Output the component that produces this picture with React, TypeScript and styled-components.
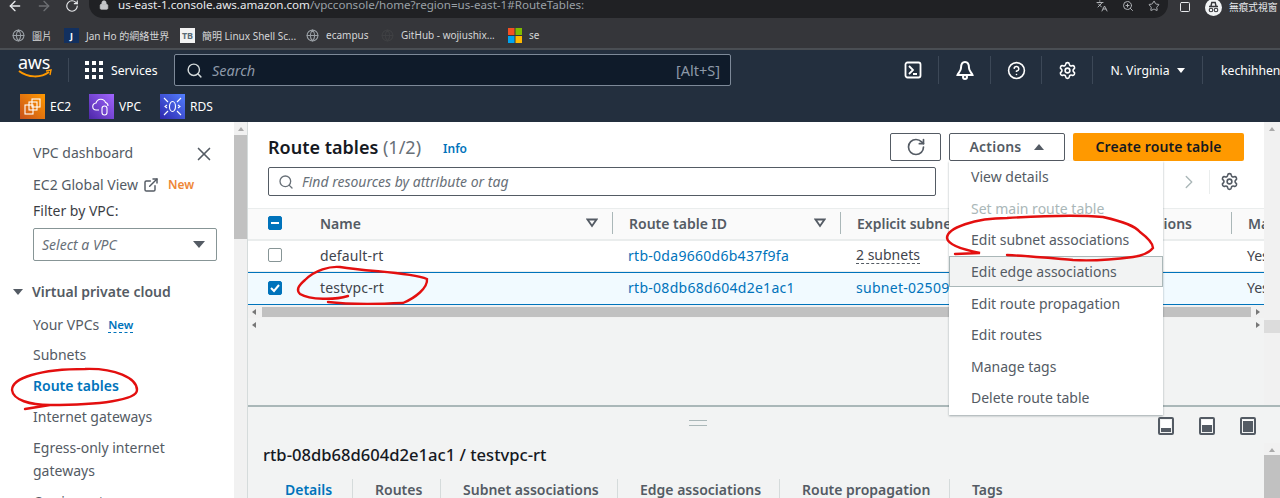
import styled, { createGlobalStyle } from "styled-components";
import {
  ArrowLeft,
  ArrowRight,
  ChevronRight,
  CircleHelp,
  ExternalLink,
  Globe,
  Languages,
  Lock,
  RotateCw,
  Search,
  Settings,
  Star,
  Square,
  X,
  ZoomIn,
} from "lucide-react";

const GlobalStyle = createGlobalStyle`
  html, body { margin: 0; padding: 0; background: #fff; }
  * { box-sizing: border-box; }
  body { font-family: "Noto Sans", "Open Sans", "Noto Sans CJK TC", sans-serif; }
`;

const Page = styled.div`
  position: relative;
  width: 1280px;
  height: 498px;
  overflow: hidden;
  display: flex;
  flex-direction: column;
`;

const AddressRow = styled.div`
  height: 18px;
  background: #35363a;
  display: flex;
  color: #e8eaed;
`;

const NavButtons = styled.div`
  width: 89px;
  display: flex;
  align-items: center;
  gap: 13px;
  padding-left: 7px;
  margin-top: -7px;
`;

const AddressPill = styled.div`
  width: 1079px;
  height: 18px;
  background: #202124;
  border-radius: 0 0 14px 14px;
  display: flex;
  align-items: center;
  padding: 0 8px 0 10px;
  font-size: 11.6px;
  color: #9aa0a6;
`;

const UrlText = styled.span`
  margin-left: 9px;
  margin-top: -9px;
  white-space: nowrap;
  b { font-weight: 400; color: #e8eaed; }
`;

const LockIcon = styled(Lock)`
  margin-top: -8px;
  flex: none;
`;

const PillIcons = styled.div`
  margin-left: auto;
  display: flex;
  gap: 14px;
  color: #aeb1b5;
  margin-top: -7px;
`;

const ProfileArea = styled.div`
  flex: 1;
  display: flex;
  align-items: center;
  padding-left: 11px;
  margin-top: -4px;
  gap: 7px;
  font-size: 9.7px;
  white-space: nowrap;
`;

const ProfileIcon = styled.svg`
  flex: none;
  margin-left: 7px;
`;

const BookmarkBar = styled.div`
  height: 32px;
  background: #35363a;
  border-bottom: 2px solid #4a4e53;
  display: flex;
  align-items: center;
  padding-top: 4px;
  color: #d4d5d7;
  font-size: 10px;
  white-space: nowrap;
`;

const Bookmark = styled.div<{ $width: number; $inset?: number }>`
  width: ${(p) => p.$width}px;
  padding-left: ${(p) => p.$inset ?? 0}px;
  display: flex;
  align-items: center;
  gap: 7px;
  flex: none;
`;

const FavTile = styled.span<{ $bg: string; $fg: string }>`
  width: 15px;
  height: 15px;
  background: ${(p) => p.$bg};
  color: ${(p) => p.$fg};
  font-size: 9px;
  font-weight: 700;
  display: flex;
  align-items: center;
  justify-content: center;
  flex: none;
`;

const NavHeader = styled.header`
  height: 72px;
  background: #232f3e;
  color: #fff;
  flex: none;
`;

const NavTop = styled.div`
  height: 40px;
  display: flex;
  align-items: center;
  padding-left: 18px;
  font-size: 12.2px;
`;

const AwsLogo = styled.div`
  width: 34px;
  height: 32px;
  flex: none;
  font-size: 18px;
  line-height: 17px;
  letter-spacing: -0.3px;
  margin-top: -1px;
  svg { display: block; margin-top: -2px; }
`;

const NavDivider = styled.span`
  width: 1px;
  height: 24px;
  background: #3c4857;
  margin: 0 16px;
  flex: none;
`;

const ServicesButton = styled.div`
  width: 89px;
  display: flex;
  align-items: center;
  gap: 8px;
  flex: none;
`;

const GridIcon = styled.div`
  width: 18px;
  height: 18px;
  display: grid;
  grid-template-columns: repeat(3, 4px);
  grid-template-rows: repeat(3, 4px);
  gap: 3px;
  span { background: #fff; }
`;

const GlobalSearch = styled.div`
  width: 557px;
  height: 32px;
  background: #0f1b2a;
  border: 1px solid #7d8998;
  border-radius: 2px;
  display: flex;
  align-items: center;
  padding: 0 10px 0 11px;
  font-size: 14.5px;
  color: #8d99a8;
  flex: none;
  svg { color: #d5dbdb; margin-right: 9px; }
  i { font-style: italic; }
  span { margin-left: auto; font-size: 14.5px; }
`;

const NavTools = styled.div`
  margin-left: 156px;
  display: flex;
  align-items: center;
  flex: none;
`;

const ToolCell = styled.div<{ $width: number; $gap?: number }>`
  width: ${(p) => p.$width}px;
  height: 28px;
  display: flex;
  align-items: center;
  justify-content: center;
  gap: ${(p) => p.$gap ?? 0}px;
  border-right: 1px solid #3c4857;
  white-space: nowrap;
`;

const UserCell = styled.div`
  padding-left: 18px;
  white-space: nowrap;
`;

const Shortcuts = styled.div`
  height: 32px;
  padding-left: 20px;
  display: flex;
  align-items: center;
  font-size: 12px;
`;

const Shortcut = styled.div<{ $width: number }>`
  width: ${(p) => p.$width}px;
  display: flex;
  align-items: center;
  gap: 5px;
  flex: none;
`;

const ServiceTile = styled.span<{ $from: string; $to: string }>`
  width: 25px;
  height: 25px;
  display: flex;
  align-items: center;
  justify-content: center;
  background: linear-gradient(45deg, ${(p) => p.$from}, ${(p) => p.$to});
`;

const Body = styled.div`
  flex: 1;
  display: flex;
  min-height: 0;
`;

const Sidebar = styled.nav`
  width: 234px;
  flex: none;
  background: #fff;
  padding: 21px 0 0 33px;
  color: #545b64;
  font-size: 14px;
  line-height: 20px;
  overflow: hidden;
  position: relative;
`;

const SideLink = styled.div<{ $gap?: number; $active?: boolean }>`
  margin-bottom: ${(p) => p.$gap ?? 11}px;
  height: 20px;
  white-space: nowrap;
  display: flex;
  align-items: center;
  color: ${(p) => (p.$active ? "#0073bb" : "#545b64")};
  font-weight: ${(p) => (p.$active ? 600 : 400)};
`;

const CloseIcon = styled(X)`
  position: absolute;
  top: 21px;
  left: 193px;
  color: #545b64;
`;

const ExternalIcon = styled(ExternalLink)`
  margin-left: 5px;
`;

const NewBadge = styled.span`
  color: #ec7211;
  opacity: 0.85;
  font-size: 12px;
  font-weight: 600;
  margin-left: 9px;
`;

const NewLink = styled.span`
  color: #0073bb;
  font-size: 11.5px;
  font-weight: 600;
  margin-left: 9px;
  border-bottom: 1px dashed #0073bb;
  line-height: 14px;
`;

const FilterLabel = styled.div`
  color: #16191f;
  opacity: 0.85;
  margin: -4px 0 7px;
`;

const VpcSelect = styled.div`
  width: 184px;
  height: 33px;
  border: 1px solid #879596;
  border-radius: 2px;
  display: flex;
  align-items: center;
  justify-content: space-between;
  padding: 0 11px 0 8px;
  font-style: italic;
  color: #687078;
  margin-bottom: 21px;
`;

const Caret = styled.span<{ $up?: boolean; $size?: number; $color?: string }>`
  display: block;
  width: 0;
  height: 0;
  flex: none;
  border-left: ${(p) => p.$size ?? 5}px solid transparent;
  border-right: ${(p) => p.$size ?? 5}px solid transparent;
  ${(p) => (p.$up ? "border-bottom" : "border-top")}: ${(p) => (p.$size ?? 5) + 1}px solid ${(p) => p.$color ?? "#545b64"};
`;

const SectionTitle = styled.div`
  display: flex;
  align-items: center;
  gap: 9px;
  margin: 0 0 13px -20px;
  font-weight: 600;
  white-space: nowrap;
`;

const ScrollTrack = styled.div<{ $width: number; $offset?: number }>`
  width: ${(p) => p.$width}px;
  margin-top: ${(p) => p.$offset ?? 0}px;
  flex: none;
  background: #f1f1f1;
  display: flex;
  flex-direction: column;
  align-items: center;
  padding-top: 5px;
`;

const ScrollThumb = styled.div<{ $height: number; $top: number; $color?: string }>`
  width: 100%;
  height: ${(p) => p.$height}px;
  margin-top: ${(p) => p.$top}px;
  background: ${(p) => p.$color ?? "#c1c1c1"};
`;

const Main = styled.main`
  flex: 1;
  min-width: 0;
  display: flex;
  flex-direction: column;
  border-left: 1px solid #d5dbdb;
  background: #f2f3f3;
`;

const TopPane = styled.div`
  height: 283px;
  flex: none;
  display: flex;
`;

const Content = styled.section`
  flex: 1;
  min-width: 0;
`;

const CardHeader = styled.div`
  height: 86px;
  background: #fff;
  padding: 10px 20px 0;
  position: relative;
`;

const TitleRow = styled.div`
  display: flex;
  align-items: center;
  height: 29px;
`;

const Title = styled.h1`
  margin: 0;
  font-size: 18px;
  font-weight: 600;
  color: #16191f;
  white-space: nowrap;
  span { font-weight: 400; color: #687078; }
`;

const InfoLink = styled.span`
  margin: 3px 0 0 22px;
  color: #0073bb;
  font-size: 12px;
  font-weight: 600;
`;

const Actions = styled.div`
  margin-left: auto;
  display: flex;
  gap: 8px;
  align-items: center;
`;

const OutlineButton = styled.div<{ $width: number }>`
  width: ${(p) => p.$width}px;
  height: 28px;
  background: #fff;
  border: 1px solid #545b64;
  border-radius: 2px;
  display: flex;
  align-items: center;
  justify-content: center;
  gap: 13px;
  color: #545b64;
  font-size: 14px;
  font-weight: 600;
  letter-spacing: 0.2px;
  position: relative;
`;

const PrimaryButton = styled.div`
  width: 171px;
  height: 28px;
  background: #ff9900;
  border-radius: 2px;
  display: flex;
  align-items: center;
  justify-content: center;
  color: #16191f;
  font-size: 14px;
  font-weight: 600;
  letter-spacing: 0.1px;
`;

const FilterRow = styled.div`
  display: flex;
  align-items: center;
  margin-top: 6px;
`;

const FilterInput = styled.div`
  width: 668px;
  height: 29px;
  border: 1px solid #545b64;
  border-radius: 2px;
  background: #fff;
  display: flex;
  align-items: center;
  gap: 8px;
  padding-left: 9px;
  font-size: 14px;
  font-style: italic;
  color: #687078;
  svg { color: #687078; }
`;

const PagerTools = styled.div`
  margin-left: auto;
  margin-right: 5px;
  display: flex;
  align-items: center;
  color: #aab7b8;
`;

const PagerGear = styled.span`
  margin-left: 9px;
  padding-left: 10px;
  border-left: 1px solid #eaeded;
  height: 24px;
  display: flex;
  align-items: center;
  color: #545b64;
`;

const Row = styled.div<{ $variant: "head" | "plain" | "selected" }>`
  display: grid;
  grid-template-columns: 56px 308px 228px 199px 192px 33px;
  height: ${(p) => (p.$variant === "selected" ? 33 : 32)}px;
  padding-bottom: 2px;
  overflow: hidden;
  align-items: center;
  font-size: 14px;
  white-space: nowrap;
  color: ${(p) => (p.$variant === "head" ? "#545b64" : "#3f444c")};
  font-weight: ${(p) => (p.$variant === "head" ? 600 : 400)};
  background: ${(p) =>
    p.$variant === "head" ? "#fafafa" : p.$variant === "selected" ? "#f1faff" : "#fff"};
  border-top: 1px solid ${(p) => (p.$variant === "selected" ? "#0073bb" : "#eaeded")};
  border-bottom: 1px solid ${(p) => (p.$variant === "selected" ? "#0073bb" : "#eaeded")};
`;

const Cell = styled.div<{ $divider?: boolean; $end?: boolean }>`
  padding: ${(p) => (p.$end ? "0 39px 0 0" : "0 0 0 16px")};
  display: flex;
  align-items: center;
  justify-content: ${(p) => (p.$end ? "flex-end" : "flex-start")};
  height: 22px;
  min-width: 0;
  overflow: hidden;
  border-left: ${(p) => (p.$divider ? "1px solid #aab7b8" : "none")};
`;

const SortIcon = styled.svg`
  display: block;
  flex: none;
  margin-left: auto;
  margin-right: 14px;
  fill: none;
  stroke: #545b64;
  stroke-width: 1.8;
`;

const NameText = styled.span`
  letter-spacing: 0.15px;
`;

const RowLink = styled.span`
  color: #0073bb;
  letter-spacing: 0.28px;
`;

const DashedText = styled.span`
  border-bottom: 1px dashed #545b64;
  line-height: 17px;
`;

const CheckBox = styled.span<{ $state: "off" | "on" | "mixed" }>`
  width: 14px;
  height: 14px;
  border-radius: 2px;
  margin-left: 20px;
  border: 1px solid ${(p) => (p.$state === "off" ? "#879596" : "#0073bb")};
  background: ${(p) => (p.$state === "off" ? "#fff" : "#0073bb")};
  display: flex;
  align-items: center;
  justify-content: center;
`;

const HScroll = styled.div<{ $thumb: boolean }>`
  height: ${(p) => (p.$thumb ? 12 : 14)}px;
  margin-top: ${(p) => (p.$thumb ? 1 : 0)}px;
  display: flex;
  align-items: center;
  justify-content: space-between;
  padding: 0 4px;
  background: ${(p) => (p.$thumb ? "#f1f1f1" : "transparent")};
`;

const HThumb = styled.div`
  position: absolute;
  left: 262px;
  width: 989px;
  height: 10px;
  background: #c1c1c1;
`;

const Arrow = styled.span<{ $dir: "left" | "right" }>`
  width: 0;
  height: 0;
  border-top: 3px solid transparent;
  border-bottom: 3px solid transparent;
  ${(p) => (p.$dir === "left" ? "border-right" : "border-left")}: 4px solid #777;
`;

const Menu = styled.div`
  position: absolute;
  z-index: 2;
  top: 27px;
  left: -1px;
  width: 214px;
  height: 254px;
  padding-top: 0.5px;
  background: #fff;
  box-shadow: 0 1px 2px rgba(0, 28, 36, 0.35);
  font-weight: 400;
  letter-spacing: 0;
`;

const MenuItem = styled.div<{ $disabled?: boolean; $hover?: boolean }>`
  height: 31.6px;
  display: flex;
  align-items: center;
  padding-left: 22px;
  font-size: 14px;
  white-space: nowrap;
  color: ${(p) => (p.$disabled ? "#aab7b8" : "#545b64")};
  background: ${(p) => (p.$hover ? "#f2f3f3" : "transparent")};
  box-shadow: ${(p) => (p.$hover ? "inset 0 0 0 1px #aab7b8" : "none")};
`;

const SplitPanel = styled.section`
  flex: 1;
  border-top: 2px solid #aab7b8;
  display: flex;
  position: relative;
`;

const SplitContent = styled.div`
  flex: 1;
  min-width: 0;
  padding: 13px 0 0 15px;
`;

const DragHandle = styled.div`
  width: 18px;
  height: 6px;
  margin-left: 426px;
  border-top: 1px solid #aab7b8;
  border-bottom: 1px solid #aab7b8;
`;

const PanelModes = styled.div`
  position: absolute;
  top: 10px;
  right: 24px;
  display: flex;
  gap: 25px;
`;

const ModeIcon = styled.span<{ $fill: number }>`
  width: 16px;
  height: 18px;
  border: 2px solid #545b64;
  border-radius: 2px;
  background: linear-gradient(to top, #545b64 ${(p) => p.$fill}%, #fff ${(p) => p.$fill}%);
  background-clip: content-box;
  padding: 1px;
`;

const PanelTitle = styled.h2`
  margin: 18px 0 0;
  font-size: 16.6px;
  line-height: 22px;
  font-weight: 500;
  color: #16191f;
  white-space: nowrap;
`;

const Tabs = styled.div`
  display: flex;
  margin-top: 13px;
  font-size: 14px;
  font-weight: 600;
  color: #545b64;
  white-space: nowrap;
`;

const Tab = styled.div<{ $width: number; $active?: boolean }>`
  width: ${(p) => p.$width}px;
  flex: none;
  padding-left: 22px;
  height: 30px;
  line-height: 22px;
  border-right: 1px solid #d5dbdb;
  color: ${(p) => (p.$active ? "#0073bb" : "#545b64")};
  &:last-child { border-right: none; }
`;

const InkLayer = styled.svg`
  position: absolute;
  inset: 0;
  z-index: 3;
  pointer-events: none;
  fill: none;
  stroke: #e30f0f;
  stroke-width: 2.4;
  stroke-linecap: round;
`;

const menuItems = [
  "View details",
  "Set main route table",
  "Edit subnet associations",
  "Edit edge associations",
  "Edit route propagation",
  "Edit routes",
  "Manage tags",
  "Delete route table",
];

const tabs = [
  { label: "Details", width: 90 },
  { label: "Routes", width: 88 },
  { label: "Subnet associations", width: 177 },
  { label: "Edge associations", width: 162 },
  { label: "Route propagation", width: 170 },
  { label: "Tags", width: 70 },
];

const Sort = () => (
  <SortIcon width="12" height="10" viewBox="0 0 12 10">
    <path d="M1.5 1.5 H10.5 L6 8 Z" />
  </SortIcon>
);

export default function App() {
  return (
    <Page>
      <GlobalStyle />
      <AddressRow>
        <NavButtons>
          <ArrowLeft size={16} />
          <ArrowRight size={16} color="#6d6f73" />
          <RotateCw size={14} />
        </NavButtons>
        <AddressPill>
          <LockIcon size={10} fill="#c4c6c9" color="#c4c6c9" />
          <UrlText>
            <b>us-east-1.console.aws.amazon.com</b>/vpcconsole/home?region=us-east-1#RouteTables:
          </UrlText>
          <PillIcons>
            <Languages size={12} />
            <ZoomIn size={12} />
            <Star size={12} />
          </PillIcons>
        </AddressPill>
        <ProfileArea>
          <Square size={12} />
          <ProfileIcon width="17" height="17" viewBox="0 0 17 17">
            <circle cx="8.5" cy="8.5" r="8.5" fill="#f1f3f4" />
            <path d="M4 7.5 H13 M6 7 L6.8 3.5 H10.2 L11 7" stroke="#35363a" strokeWidth="1.4" fill="none" />
            <circle cx="6" cy="11" r="1.8" fill="none" stroke="#35363a" strokeWidth="1.1" />
            <circle cx="11" cy="11" r="1.8" fill="none" stroke="#35363a" strokeWidth="1.1" />
          </ProfileIcon>
          無痕式視窗
        </ProfileArea>
      </AddressRow>

      <BookmarkBar>
        <Bookmark $width={64} $inset={12}>
          <Globe size={13} color="#9aa0a6" />
          圖片
        </Bookmark>
        <Bookmark $width={116}>
          <FavTile $bg="#12305f" $fg="#fff">J</FavTile>
          Jan Ho 的網絡世界
        </Bookmark>
        <Bookmark $width={126}>
          <FavTile $bg="#f2f2f2" $fg="#5a6b78">TB</FavTile>
          簡明 Linux Shell Sc...
        </Bookmark>
        <Bookmark $width={75}>
          <Globe size={13} color="#9aa0a6" />
          ecampus
        </Bookmark>
        <Bookmark $width={127}>
          <Globe size={13} color="#3f4043" />
          GitHub - wojiushix...
        </Bookmark>
        <Bookmark $width={40}>
          <svg width="14" height="15" viewBox="0 0 14 15">
            <rect width="6.5" height="7" fill="#f25022" />
            <rect x="7.5" width="6.5" height="7" fill="#7fba00" />
            <rect y="8" width="6.5" height="7" fill="#00a4ef" />
            <rect x="7.5" y="8" width="6.5" height="7" fill="#ffb900" />
          </svg>
          se
        </Bookmark>
      </BookmarkBar>

      <NavHeader>
        <NavTop>
          <AwsLogo>
            aws
            <svg width="34" height="10" viewBox="0 0 34 10">
              <path d="M1 2 C10 9 23 9 31 3" fill="none" stroke="#ff9900" strokeWidth="2" />
              <path d="M28 2 L33 1 L32 6" fill="none" stroke="#ff9900" strokeWidth="1.4" />
            </svg>
          </AwsLogo>
          <NavDivider />
          <ServicesButton>
            <GridIcon>
              {Array.from({ length: 9 }, (_, i) => (
                <span key={i} />
              ))}
            </GridIcon>
            Services
          </ServicesButton>
          <GlobalSearch>
            <Search size={17} />
            <i>Search</i>
            <span>[Alt+S]</span>
          </GlobalSearch>
          <NavTools>
            <ToolCell $width={52}>
              <svg width="18" height="18" viewBox="0 0 18 18" fill="none" stroke="#fff" strokeWidth="1.8">
                <rect x="1.5" y="1.5" width="15" height="15" rx="2" />
                <path d="M5 5 L9 9 L5 13 M9 13 H13" />
              </svg>
            </ToolCell>
            <ToolCell $width={52}>
              <svg width="20" height="20" viewBox="0 0 20 20" fill="none" stroke="#fff" strokeWidth="2">
                <path d="M10 2 C7 2 6 5 6 8 C6 11 3 13 2.5 15 H17.5 C17 13 14 11 14 8 C14 5 13 2 10 2 Z" />
                <circle cx="10" cy="17" r="2" />
              </svg>
            </ToolCell>
            <ToolCell $width={51}>
              <CircleHelp size={19} strokeWidth={2} />
            </ToolCell>
            <ToolCell $width={51}>
              <Settings size={19} strokeWidth={2} />
            </ToolCell>
            <ToolCell $width={110} $gap={7}>
              N. Virginia
              <Caret $color="#fff" $size={4} />
            </ToolCell>
            <UserCell>kechihheng</UserCell>
          </NavTools>
        </NavTop>
        <Shortcuts>
          <Shortcut $width={69}>
            <ServiceTile $from="#c8511b" $to="#ff9900">
              <svg width="17" height="17" viewBox="0 0 17 17" fill="none" stroke="#fff" strokeWidth="1.1">
                <rect x="1" y="7" width="8" height="9" />
                <rect x="5" y="4" width="8" height="8" />
                <rect x="8" y="1" width="8" height="8" />
              </svg>
            </ServiceTile>
            EC2
          </Shortcut>
          <Shortcut $width={71}>
            <ServiceTile $from="#4d27a8" $to="#a166ff">
              <svg width="19" height="19" viewBox="0 0 19 19" fill="none" stroke="#fff" strokeWidth="1.1">
                <path d="M7 13 H4.5 A3.5 3.5 0 0 1 4 6 A5 5 0 0 1 13.5 5.5 A3.5 3.5 0 0 1 16 9" />
                <rect x="10" y="9" width="5" height="9" rx="2.5" />
              </svg>
            </ServiceTile>
            VPC
          </Shortcut>
          <Shortcut $width={60}>
            <ServiceTile $from="#2e27ad" $to="#527fff">
              <svg width="19" height="19" viewBox="0 0 19 19" fill="none" stroke="#fff" strokeWidth="1.1">
                <ellipse cx="9.5" cy="9.5" rx="3" ry="5" />
                <path d="M1 1 L5 5 M18 1 L14 5 M1 18 L5 14 M18 18 L14 14 M4 8 L2 9.5 L4 11 M15 8 L17 9.5 L15 11" />
              </svg>
            </ServiceTile>
            RDS
          </Shortcut>
        </Shortcuts>
      </NavHeader>

      <Body>
        <Sidebar>
          <CloseIcon size={22} strokeWidth={1.8} />
          <SideLink $gap={12}>VPC dashboard</SideLink>
          <SideLink $gap={10}>
            EC2 Global View
            <ExternalIcon size={16} strokeWidth={2.2} />
            <NewBadge>New</NewBadge>
          </SideLink>
          <FilterLabel>Filter by VPC:</FilterLabel>
          <VpcSelect>
            Select a VPC
            <Caret $size={6} />
          </VpcSelect>
          <SectionTitle>
            <Caret $size={5} />
            Virtual private cloud
          </SectionTitle>
          <SideLink $gap={10}>
            Your VPCs
            <NewLink>New</NewLink>
          </SideLink>
          <SideLink>Subnets</SideLink>
          <SideLink $active>Route tables</SideLink>
          <SideLink>Internet gateways</SideLink>
          <SideLink $gap={3}>Egress-only internet</SideLink>
          <SideLink>gateways</SideLink>
          <SideLink>Carrier gateways</SideLink>
        </Sidebar>
        <ScrollTrack $width={13}>
          <Caret $up $size={3} $color="#aaa" />
          <ScrollThumb $height={104} $top={4} />
        </ScrollTrack>

        <Main>
          <TopPane>
            <Content>
              <CardHeader>
                <TitleRow>
                  <Title>
                    Route tables <span>(1/2)</span>
                  </Title>
                  <InfoLink>Info</InfoLink>
                  <Actions>
                    <OutlineButton $width={51}>
                      <RotateCw size={20} />
                    </OutlineButton>
                    <OutlineButton $width={116}>
                      Actions
                      <Caret $up $size={5} />
                      <Menu>
                        {menuItems.map((item) => (
                          <MenuItem
                            key={item}
                            $disabled={item === "Set main route table"}
                            $hover={item === "Edit edge associations"}
                          >
                            {item}
                          </MenuItem>
                        ))}
                      </Menu>
                    </OutlineButton>
                    <PrimaryButton>Create route table</PrimaryButton>
                  </Actions>
                </TitleRow>
                <FilterRow>
                  <FilterInput>
                    <Search size={16} />
                    Find resources by attribute or tag
                  </FilterInput>
                  <PagerTools>
                    <ChevronRight size={22} strokeWidth={1.5} />
                    <PagerGear>
                      <Settings size={19} />
                    </PagerGear>
                  </PagerTools>
                </FilterRow>
              </CardHeader>

              <Row $variant="head">
                <CheckBox $state="mixed">
                  <svg width="10" height="10" viewBox="0 0 10 10">
                    <path d="M1 5 H9" stroke="#fff" strokeWidth="2" />
                  </svg>
                </CheckBox>
                <Cell>
                  Name
                  <Sort />
                </Cell>
                <Cell $divider>
                  Route table ID
                  <Sort />
                </Cell>
                <Cell $divider>Explicit subnet associations</Cell>
                <Cell $end>ions</Cell>
                <Cell $divider>Main</Cell>
              </Row>
              <Row $variant="plain">
                <CheckBox $state="off" />
                <Cell>
                  <NameText>default-rt</NameText>
                </Cell>
                <Cell>
                  <RowLink>rtb-0da9660d6b437f9fa</RowLink>
                </Cell>
                <Cell>
                  <DashedText>2 subnets</DashedText>
                </Cell>
                <Cell />
                <Cell>Yes</Cell>
              </Row>
              <Row $variant="selected">
                <CheckBox $state="on">
                  <svg width="12" height="12" viewBox="0 0 12 12" fill="none">
                    <path d="M2 6 L5 9 L10 3" stroke="#fff" strokeWidth="2" />
                  </svg>
                </CheckBox>
                <Cell>
                  <NameText>testvpc-rt</NameText>
                </Cell>
                <Cell>
                  <RowLink>rtb-08db68d604d2e1ac1</RowLink>
                </Cell>
                <Cell>
                  <RowLink>subnet-0250933a</RowLink>
                </Cell>
                <Cell />
                <Cell>Yes</Cell>
              </Row>
              <HScroll $thumb>
                <Arrow $dir="left" />
                <HThumb />
                <Arrow $dir="right" />
              </HScroll>
              <HScroll $thumb={false}>
                <Arrow $dir="left" />
                <Arrow $dir="right" />
              </HScroll>
            </Content>
            <ScrollTrack $width={16}>
              <Caret $up $size={3} $color="#aaa" />
              <ScrollThumb $height={13} $top={189} $color="#dcdcdc" />
            </ScrollTrack>
          </TopPane>

          <SplitPanel>
            <SplitContent>
              <DragHandle />
              <PanelModes>
                <ModeIcon $fill={35} />
                <ModeIcon $fill={60} />
                <ModeIcon $fill={85} />
              </PanelModes>
              <PanelTitle>rtb-08db68d604d2e1ac1 / testvpc-rt</PanelTitle>
              <Tabs>
                {tabs.map((tab) => (
                  <Tab key={tab.label} $width={tab.width} $active={tab.label === "Details"}>
                    {tab.label}
                  </Tab>
                ))}
              </Tabs>
            </SplitContent>
            <ScrollTrack $width={16} $offset={36}>
              <Caret $up $size={3} $color="#aaa" />
              <ScrollThumb $height={60} $top={3} />
            </ScrollTrack>
          </SplitPanel>
        </Main>
      </Body>

      <InkLayer viewBox="0 0 1280 498" width="1280" height="498">
        <path d="M25 409 L50 405 C30 405 13 400 12 390 C12 378 40 369 85 369 C115 368 137 378 137 390 C137 400 100 405 50 405" />
        <path d="M348 296 C335 300 310 300 300 294 C296 290 298 286 305 280 C315 270 330 266 340 267 C370 272 410 272 427 279 C428 288 415 298 403 303 C380 304 345 304 328 302" />
        <path d="M955 254 L980 253 C965 250 948 245 947 238 C947 228 975 218 1007 218 C1040 216 1080 215 1103 217 C1125 222 1135 226 1140 232 C1148 238 1153 243 1153 248 C1148 254 1140 256 1133 257 C1110 260 1090 261 1073 260 C1050 258 1030 256 1007 255" />
      </InkLayer>
    </Page>
  );
}
